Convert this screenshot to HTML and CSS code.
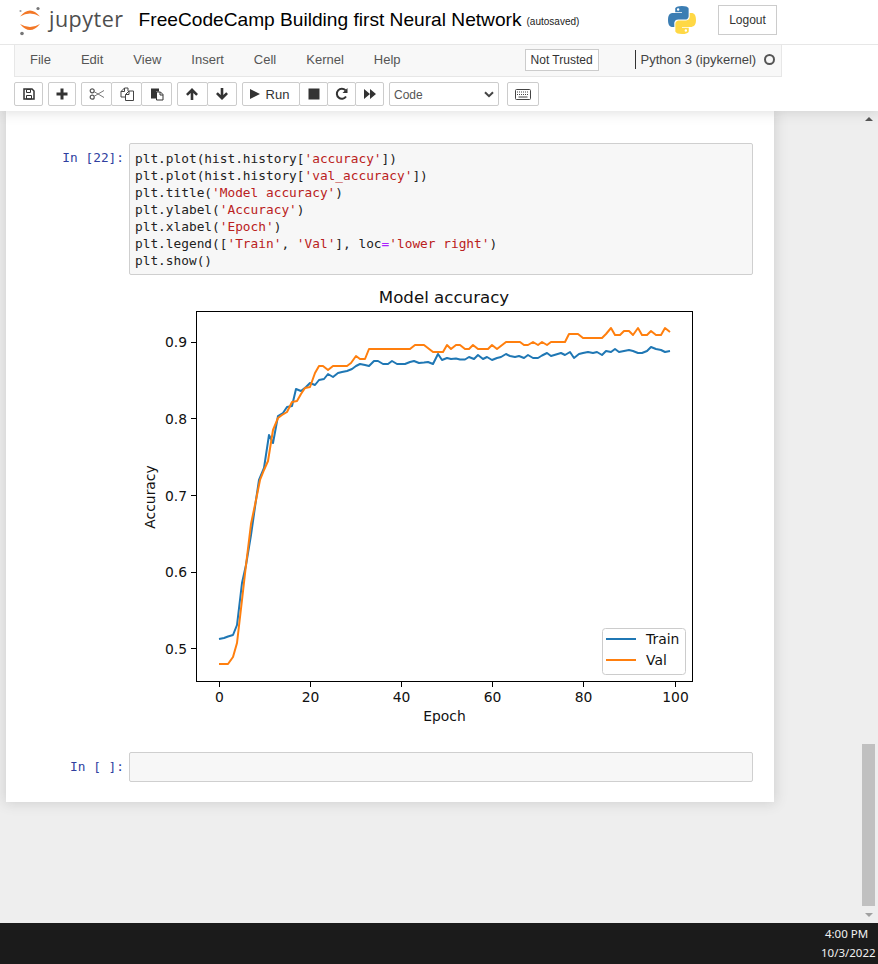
FILE: index.html
```html
<!DOCTYPE html>
<html lang="en">
<head>
    <meta charset="UTF-8">
    <title>FreeCodeCamp Building first Neural Network</title>
    <link rel="stylesheet" href="styles.css">
</head>
<body>
    <div class="top">
        <div class="header">
            <svg class="logo" width="24" height="30" viewBox="0 0 24 30">
                <path d="M2 10.500 Q12 -1.500 22 10.500 Q12 4.500 2 10.500z" fill="#f37726"/>
                <path d="M2 18 Q12 30 22 18 Q12 24 2 18z" fill="#f37726"/>
                <circle cx="20" cy="2.5" r="1.6" fill="#767677"/>
                <circle cx="2.5" cy="5" r="1.1" fill="#9e9e9e"/>
                <circle cx="4" cy="27.5" r="1.8" fill="#767677"/>
            </svg>
            <span class="wordmark">jupyter</span>
            <span class="nb-title">FreeCodeCamp Building first Neural Network</span>
            <span class="autosaved">(autosaved)</span>
            <svg class="python" width="28" height="30" viewBox="0 0 24 24">
                <path fill="#3b7db3" fill-rule="evenodd" d="M11.9 0C5.8 0 6.2 2.6 6.2 2.6v2.7h5.8v.8H3.9S0 5.7 0 11.9s3.4 6 3.4 6h2v-2.9s-.1-3.4 3.4-3.4h5.7s3.2.1 3.2-3.1V3.2S18.8 0 11.9 0zM8.7 1.9a1 1 0 1 1 0 2.1 1 1 0 0 1 0-2.1z"/>
                <path fill="#ffd845" fill-rule="evenodd" transform="rotate(180 12 12)" d="M11.9 0C5.8 0 6.2 2.6 6.2 2.6v2.7h5.8v.8H3.9S0 5.7 0 11.9s3.4 6 3.4 6h2v-2.9s-.1-3.4 3.4-3.4h5.7s3.2.1 3.2-3.1V3.2S18.8 0 11.9 0zM8.7 1.9a1 1 0 1 1 0 2.1 1 1 0 0 1 0-2.1z"/>
            </svg>
            <button class="logout">Logout</button>
        </div>
        <div class="menubar">
            <span class="menu-item">File</span>
            <span class="menu-item">Edit</span>
            <span class="menu-item">View</span>
            <span class="menu-item">Insert</span>
            <span class="menu-item">Cell</span>
            <span class="menu-item">Kernel</span>
            <span class="menu-item">Help</span>
            <span class="not-trusted">Not Trusted</span>
            <span class="kernel-name">Python 3 (ipykernel)</span>
            <span class="kernel-dot"></span>
        </div>
        <div class="toolbar">
            <div class="btn-group">
                <button class="btn">
                    <svg width="14" height="14" viewBox="0 0 14 14"><path d="M2 2h8l2 2v8H2z" fill="none" stroke="#333" stroke-width="1.5"/><path d="M4.5 2.5h4v3h-4zM4.5 8.5h5V12h-5z" fill="none" stroke="#333"/></svg>
                </button>
            </div>
            <div class="btn-group">
                <button class="btn btn-add">
                    <svg width="14" height="14" viewBox="0 0 14 14"><path d="M5.5 1.5h3v4h4v3h-4v4h-3v-4h-4v-3h4z" fill="#333"/></svg>
                </button>
            </div>
            <div class="btn-group">
                <button class="btn">
                    <svg width="16" height="14" viewBox="0 0 16 14"><circle cx="3.2" cy="3.8" r="2" fill="none" stroke="#555" stroke-width="1.2"/><circle cx="3.2" cy="10.2" r="2" fill="none" stroke="#555" stroke-width="1.2"/><path d="M5 4.6 15 10.5M5 9.4 15 3.5" stroke="#777" stroke-width="1"/></svg>
                </button>
                <button class="btn">
                    <svg width="14" height="14" viewBox="0 0 14 14"><path d="M8 4V1H4.500L1 4.500V10h4.500" fill="none" stroke="#444"/><path d="M1 4.500h3.500V1" fill="none" stroke="#444"/><path d="M5.500 7.500 9 4h4.500v9.500h-8z" fill="#fff" stroke="#444"/><path d="M5.500 7.500H9V4" fill="none" stroke="#444"/></svg>
                </button>
                <button class="btn">
                    <svg width="14" height="14" viewBox="0 0 14 14"><path d="M1 1.500h8v3H6v7H1z" fill="#333"/><path d="M6.500 5h4l2.500 2.500V13H6.500z" fill="#fff" stroke="#333"/><path d="M10 5v3h3" fill="none" stroke="#333"/></svg>
                </button>
            </div>
            <div class="btn-group">
                <button class="btn">
                    <svg width="14" height="14" viewBox="0 0 14 14"><path d="M7 1 13 7l-1.800 1.800-2.900-2.900V13H5.700V5.900L2.800 8.800 1 7z" fill="#333"/></svg>
                </button>
                <button class="btn">
                    <svg width="14" height="14" viewBox="0 0 14 14"><path d="M7 13 13 7l-1.800-1.800-2.900 2.900V1H5.700v7.100L2.800 5.200 1 7z" fill="#333"/></svg>
                </button>
            </div>
            <div class="btn-group">
                <button class="btn btn-run">
                    <svg width="12" height="12" viewBox="0 0 12 12"><path d="M1 1 11 6 1 11z" fill="#333"/></svg>
                    <span>Run</span>
                </button>
                <button class="btn">
                    <svg width="12" height="12" viewBox="0 0 12 12"><path d="M.5 .5h11v11H.5z" fill="#333"/></svg>
                </button>
                <button class="btn">
                    <svg width="14" height="14" viewBox="0 0 14 14"><path d="M11 9.500A5 5 0 1 1 10.500 3.300" fill="none" stroke="#333" stroke-width="2"/><path d="M12.500 1v5h-5z" fill="#333"/></svg>
                </button>
                <button class="btn">
                    <svg width="14" height="12" viewBox="0 0 14 12"><path d="M1 1 7 6 1 11zM7 1 13 6 7 11z" fill="#333"/></svg>
                </button>
            </div>
            <div class="cell-type">
                <span>Code</span>
                <svg width="10" height="7" viewBox="0 0 10 7"><path d="M1 1.200 5 5.200 9 1.200" fill="none" stroke="#444" stroke-width="2"/></svg>
            </div>
            <button class="btn btn-keyboard">
                <svg width="16" height="11" viewBox="0 0 16 11"><rect x=".5" y=".5" width="15" height="10" rx="1" fill="none" stroke="#444"/><path d="M2 3h12M2 5.500h12" stroke="#444" stroke-dasharray="1 1"/><path d="M3.500 8h9" stroke="#444"/></svg>
            </button>
        </div>
    </div>

    <div class="site">
        <div class="notebook">
            <div class="cell">
                <div class="prompt">In&nbsp;[22]:</div>
                <pre class="input">plt.plot(hist.history[<span class="str">'accuracy'</span>])
plt.plot(hist.history[<span class="str">'val_accuracy'</span>])
plt.title(<span class="str">'Model accuracy'</span>)
plt.ylabel(<span class="str">'Accuracy'</span>)
plt.xlabel(<span class="str">'Epoch'</span>)
plt.legend([<span class="str">'Train'</span>, <span class="str">'Val'</span>], loc<span class="op">=</span><span class="str">'lower right'</span>)
plt.show()</pre>
            </div>

            <!-- chart uses page coordinates through its viewBox -->
            <svg class="chart" width="600" height="455" viewBox="130 285 600 455">
                <polyline class="line" stroke="#1f77b4" points="219,639 224,638 228,636.500 233,635 237,625 242,583 246,565 251,535 256,500 259,480 264,468 269,435 273,443 278,416 283,413 287,407 292,406 296,389 301,391 306,387 310,383 315,385 319,380 324,379 328,374 333,377 338,373 342,372 347,371 352,369 356,366 360,364 365,365 369,366 374,361 378,361 383,364 388,364 392,361 397,364 401,364 405,364 410,362 414,361 419,363 424,362.500 428,362 433,364 438,354 442,360 447,358 451,359 456,358.500 460,359.500 465,359.500 469,357 474,359 478,355 483,359 487,357 492,360 497,358 501,357 506,354 510,356 515,357 519,356 524,358 528,355 533,358 538,358 542,355.500 547,353 551,356 556,354.500 561,353 565,355 570,352 574,358 579,354 583,353 588,352 593,353 597,352 602,355 606,351 611,352 615,349 619,352 624,351 629,350 633,351 638,353 642,353 647,351 651,347 656,349 661,350 665,352 670,351"/>
                <polyline class="line" stroke="#ff7f0e" points="219,664 224,664 228,664 233,657 237,643 242,600 246,565 251,524 256,500 260,480 264,470 268,461 273,430 278,418 282,415 287,412 292,402 297,401 301,394 305,388 310,387 315,373 319,366 323,366 328,370 333,366 347,366 351,363 356,356 360,359 365,359 369,349 410,349 415,345 424,345 433,352 443,352 447,345 451,349 456,345 460,345 465,349 469,349 473,345 478,349 488,349 492,345 497,349 506,342 520,342 524,345 528,345 533,342 538,345 542,342 547,345 551,342 565,342 569,334 578,334 583,338 602,338 606,334 611,328 615,335 620,335 624,331 629,331 633,335 638,328 642,335 647,335 651,331 656,335 661,335 665,328 670,332"/>
                <rect class="axes" x="196.500" y="311.500" width="496" height="370"/>
                <path class="ticks" d="M219.500 682v5M310.500 682v5M401.500 682v5M492.500 682v5M583.500 682v5M675.500 682v5M196 342.500h-5M196 418.500h-5M196 495.500h-5M196 572.500h-5M196 648.500h-5"/>
                <g class="tick-x">
                    <text x="219.500" y="702">0</text>
                    <text x="310.500" y="702">20</text>
                    <text x="401.500" y="702">40</text>
                    <text x="492.500" y="702">60</text>
                    <text x="583.500" y="702">80</text>
                    <text x="675.500" y="702">100</text>
                </g>
                <g class="tick-y">
                    <text x="187" y="347">0.9</text>
                    <text x="187" y="424">0.8</text>
                    <text x="187" y="501">0.7</text>
                    <text x="187" y="577">0.6</text>
                    <text x="187" y="654">0.5</text>
                </g>
                <text class="chart-title" x="444" y="303">Model accuracy</text>
                <text class="axis-label" x="444.500" y="721">Epoch</text>
                <text class="axis-label" transform="translate(155 497) rotate(-90)">Accuracy</text>
                <rect class="legend" x="602.500" y="628.500" width="83" height="46" rx="3"/>
                <path d="M606 639h30" stroke="#1f77b4" stroke-width="2"/>
                <path d="M606 660h30" stroke="#ff7f0e" stroke-width="2"/>
                <text class="legend-text" x="646" y="644">Train</text>
                <text class="legend-text" x="646" y="665">Val</text>
            </svg>

            <div class="cell cell-empty">
                <div class="prompt">In&nbsp;[&nbsp;]:</div>
                <pre class="input input-empty"></pre>
            </div>
        </div>
        <div class="scrollbar">
            <span class="arrow-up"></span>
            <span class="thumb"></span>
            <span class="arrow-down"></span>
        </div>
    </div>

    <div class="taskbar">
        <div class="clock">
            <div>4:00 PM</div>
            <div>10/3/2022</div>
        </div>
    </div>
</body>
</html>
```

FILE: styles.css
```css
* { box-sizing: border-box; }
html, body { margin: 0; padding: 0; }
body {
    width: 878px;
    height: 964px;
    overflow: hidden;
    display: flex;
    flex-direction: column;
    font-family: "Liberation Sans", Arial, sans-serif;
    font-size: 13px;
    color: #000;
    background: #eee;
}

.top {
    height: 111px;
    background: #fff;
    box-shadow: 0 0 12px 1px rgba(87, 87, 87, 0.2);
    position: relative;
    z-index: 2;
}
.header {
    height: 45px;
    display: flex;
    align-items: center;
    padding: 0 101px 5px 18px;
    border-bottom: 1px solid #e7e7e7;
}
.logo { flex: none; margin-top: 2px; }
.wordmark {
    font-family: "Open Sans", sans-serif;
    font-size: 21.500px;
    letter-spacing: 0.500px;
    color: #4e4e4e;
    margin-left: 7px;
    margin-top: -3px;
}
.nb-title { font-size: 19.150px; margin-left: 15px; }
.autosaved { font-size: 10px; color: #222; margin-left: 5px; margin-top: 3px; }
.python { margin-left: auto; margin-top: 1px; }
.logout {
    width: 59px;
    height: 30px;
    margin-left: 22px;
    margin-top: 1px;
    background: #fff;
    border: 1px solid #ccc;
    font: 12px "Liberation Sans", Arial, sans-serif;
    color: #333;
}

.menubar {
    width: 768px;
    height: 32px;
    margin-left: 14px;
    padding-bottom: 3px;
    display: flex;
    align-items: center;
    background: #f8f8f8;
    border: 1px solid #e7e7e7;
    border-top: 0;
    color: #555;
}
.menu-item { padding: 0 15px; }
.not-trusted {
    flex: none;
    width: 74px;
    height: 22px;
    margin-left: 109px;
    margin-top: 2px;
    line-height: 20px;
    text-align: center;
    font-size: 12px;
    color: #333;
    background: #fff;
    border: 1px solid #ccc;
}
.kernel-name {
    flex: none;
    margin-left: 36px;
    padding-left: 5px;
    border-left: 1px solid #333;
    line-height: 19px;
    white-space: nowrap;
    color: #444;
}
.kernel-dot {
    flex: none;
    width: 11px;
    height: 11px;
    margin-left: 8px;
    border: 2px solid #555;
    border-radius: 50%;
}

.toolbar {
    display: flex;
    gap: 5px;
    margin: 5px 0 0 14px;
}
.btn-group { display: flex; }
.btn {
    height: 24px;
    min-width: 28px;
    padding: 0;
    display: flex;
    align-items: center;
    justify-content: center;
    background: #fff;
    border: 1px solid #ccc;
    border-radius: 2px;
    font: 13px "Liberation Sans", Arial, sans-serif;
    color: #333;
}
.btn-group .btn + .btn { margin-left: -1px; }
.btn-group:nth-child(1) .btn { width: 29px; }
.btn-group:nth-child(3) .btn { width: 31px; }
.btn-group:nth-child(4) .btn { width: 30.500px; }
.btn-group:nth-child(5) .btn { width: 29px; }
.btn-group:nth-child(5) .btn-run { width: 58px; gap: 5px; padding-right: 4px; }
.cell-type {
    width: 110px;
    height: 24px;
    padding: 1px 4px 0;
    display: flex;
    align-items: center;
    justify-content: space-between;
    font-size: 12px;
    color: #555;
    background: #fff;
    border: 1px solid #ccc;
    border-radius: 2px;
}
.btn-keyboard { width: 32px; margin-left: 3px; }

.site {
    flex: 1;
    display: flex;
    justify-content: space-between;
    min-height: 0;
}
.notebook {
    width: 768px;
    height: 691px;
    margin-left: 6px;
    padding-top: 32px;
    background: #fff;
    box-shadow: 0 0 12px 1px rgba(87, 87, 87, 0.2);
}
.cell { display: flex; }
.prompt {
    width: 123px;
    padding: 6px 5px 0 0;
    text-align: right;
    font: 12.800px/17px "DejaVu Sans Mono", monospace;
    color: #303f9f;
}
.input {
    width: 624px;
    height: 132px;
    margin: 0;
    padding: 6px 5px 0;
    background: #f7f7f7;
    border: 1px solid #cfcfcf;
    border-radius: 2px;
    font: 12.800px/17px "DejaVu Sans Mono", monospace;
    color: #222;
}
.str { color: #ba2121; }
.op { color: #a2f; }
.input-empty { height: 30px; }

.chart { display: block; margin: 10px 0 12px 124px; }
.line { fill: none; stroke-width: 2; stroke-linejoin: round; }
.axes { fill: none; stroke: #000; stroke-width: 1; }
.ticks { stroke: #000; stroke-width: 1; fill: none; }
.chart text { font-family: "DejaVu Sans", sans-serif; font-size: 13.890px; fill: #111; }
.tick-x text, .axis-label { text-anchor: middle; }
.tick-y text { text-anchor: end; }
.chart .chart-title { font-size: 16.670px; text-anchor: middle; }
.legend { fill: #fff; fill-opacity: 0.8; stroke: #ccc; stroke-width: 1; }

.scrollbar {
    width: 16px;
    margin-right: 0;
    position: relative;
    flex: none;
    margin-left: auto;
}
.thumb {
    position: absolute;
    left: 0;
    top: 633px;
    width: 13px;
    height: 162px;
    background: #c0c0c0;
}
.arrow-up, .arrow-down {
    position: absolute;
    left: 3px;
    width: 0;
    height: 0;
    border-left: 4px solid transparent;
    border-right: 4px solid transparent;
}
.arrow-up { top: 6px; border-bottom: 4px solid #555; }
.arrow-down { top: 802px; border-top: 4px solid #a0a0a0; }

.taskbar {
    height: 41px;
    flex: none;
    display: flex;
    justify-content: flex-end;
    background: #1b1b1b;
    color: #f0f0f0;
}
.clock {
    width: 51px;
    margin-right: 6px;
    padding-top: 2px;
    text-align: center;
    font-family: "Noto Sans", sans-serif;
    font-size: 11.500px;
    line-height: 18.500px;
    white-space: nowrap;
}
```
